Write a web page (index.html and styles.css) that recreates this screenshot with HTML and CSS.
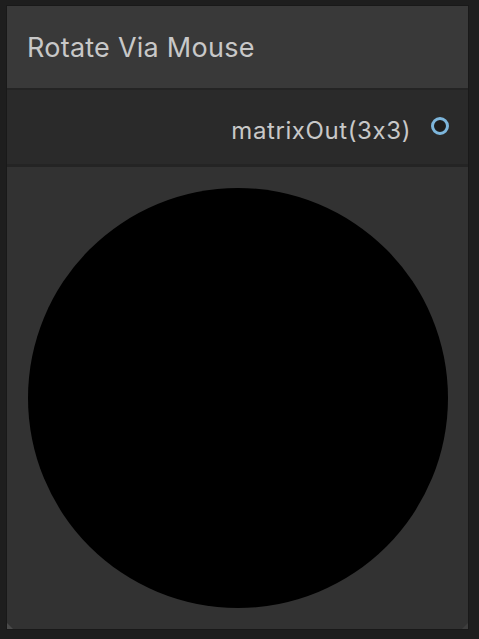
FILE: index.html
```html
<!DOCTYPE html>
<html>
<head>
<meta charset="utf-8">
<link rel="stylesheet" href="styles.css">
</head>
<body>
<div class="node">
  <div class="header">Rotate Via Mouse</div>
  <div class="ports">
    <span class="port-label">matrixOut(3x3)</span>
    <span class="port-dot"></span>
  </div>
  <div class="preview">
    <div class="disc"></div>
    <span class="grip grip-left"></span>
    <span class="grip grip-right"></span>
  </div>
</div>
</body>
</html>
```
FILE: styles.css
```css
html, body {
  margin: 0;
  padding: 0;
  background: #1e1e1e;
  width: 479px;
  height: 639px;
  overflow: hidden;
  font-family: Inter, "Noto Sans", sans-serif;
  font-feature-settings: "calt" 0;
}
.node {
  margin: 6px 0 0 7px;
  width: 461px;
  height: 623px;
  display: flex;
  flex-direction: column;
  background: #323232;
  box-shadow: 0 0 0 1px #191919;
}
.header {
  flex: none;
  background: #393939;
  color: #c8c8c8;
  font-size: 27px;
  letter-spacing: 0.25px;
  display: flex;
  align-items: center;
  padding-left: 20px;
  border-bottom: 2px solid #242424;
  box-sizing: border-box;
  height: 84px;
}
.ports {
  height: 77px;
  flex: none;
  box-sizing: border-box;
  background: #2a2a2a;
  border-bottom: 3px solid #242424;
  display: flex;
  align-items: center;
  justify-content: flex-end;
  padding-right: 19px;
  gap: 21px;
}
.port-label {
  color: #c8c8c8;
  font-size: 24px;
  letter-spacing: 0.6px;
  margin-top: 6px;
  margin-right: -1px;
}
.port-dot {
  width: 12px;
  height: 12px;
  border-radius: 50%;
  border: 3px solid #7db6dc;
  background: #1e1e1e;
  margin-top: -2px;
}
.preview {
  flex: 1;
  position: relative;
  display: flex;
  justify-content: center;
  padding-top: 21px;
}
.disc {
  width: 420px;
  height: 420px;
  border-radius: 50%;
  background: #000;
}
.grip {
  position: absolute;
  bottom: 0;
  width: 0;
  height: 0;
  border-style: solid;
}
.grip-left {
  left: 0;
  border-width: 6px 0 0 6px;
  border-color: transparent transparent transparent #4a4a4a;
}
.grip-right {
  right: 0;
  border-width: 0 0 6px 6px;
  border-color: transparent transparent #3e3e3e transparent;
}
```
